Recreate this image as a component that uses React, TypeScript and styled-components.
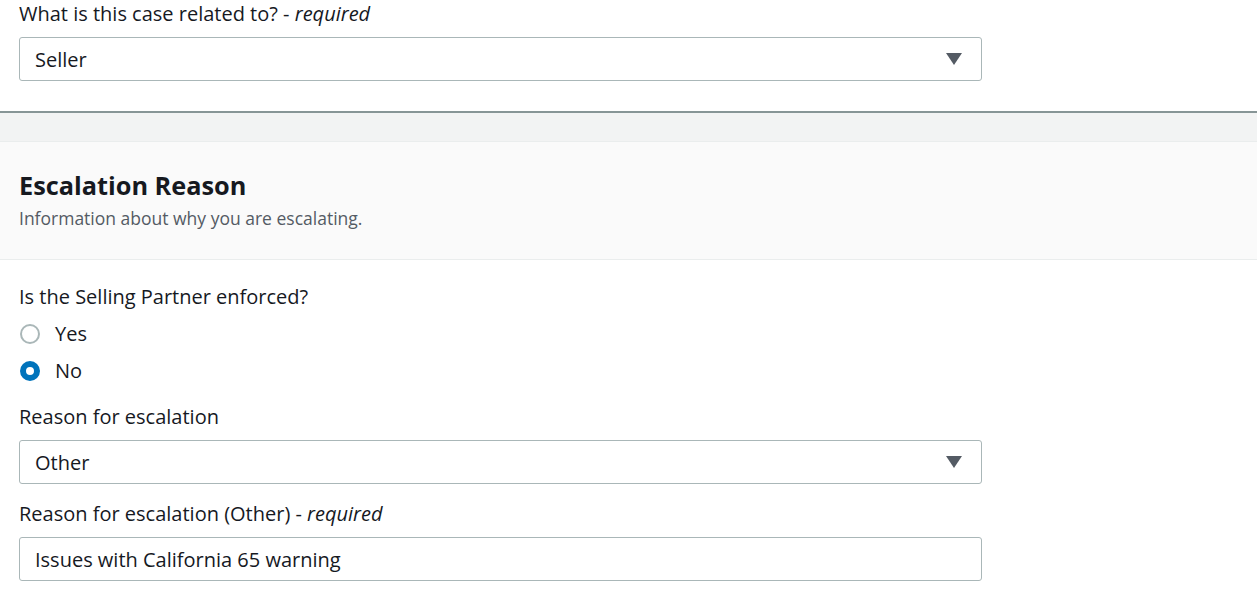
import React from 'react';
import styled, { createGlobalStyle } from 'styled-components';

const GlobalStyle = createGlobalStyle`
  body {
    margin: 0;
    background: #fff;
    font-family: "Open Sans", "Noto Sans", Arial, sans-serif;
    color: #16191f;
  }
`

const Page = styled.div`
  width: 1257px;
  height: 599px;
  overflow: hidden;
  background: #fff;
`

const Section = styled.div<{ $top: number; $bottom?: number }>`
  padding: ${(p) => p.$top}px 19px ${(p) => p.$bottom ?? 0}px;
  width: 963px;
  display: flex;
  flex-direction: column;
`

const Field = styled.div<{ $gap?: number; $after?: number }>`
  display: flex;
  flex-direction: column;
  gap: ${(p) => p.$gap ?? 9}px;
  margin-bottom: ${(p) => p.$after ?? 0}px;
`

const Label = styled.label`
  font-size: 20px;
  line-height: 28px;
  color: #16191f;

  em {
    font-style: italic;
  }
`

const Control = styled.div`
  box-sizing: border-box;
  height: 44px;
  border: 1px solid #aab7b8;
  border-radius: 3px;
  display: flex;
  align-items: center;
  justify-content: space-between;
  padding: 0 19px 0 15px;
  font-size: 20px;
  color: #16191f;
  background: #fff;
`

const Caret = styled.span`
  width: 0;
  height: 0;
  border-left: 8px solid transparent;
  border-right: 8px solid transparent;
  border-top: 12px solid #545b64;
`

const Divider = styled.div`
  border-top: 2px solid #879596;
  background: #f2f3f3;
  height: 28px;
  border-bottom: 1px solid #eaeded;
`

const Header = styled.div`
  box-sizing: border-box;
  background: #fafafa;
  border-bottom: 1px solid #eaeded;
  padding: 28px 19px 0;
  height: 118px;
`

const Title = styled.h2`
  margin: 0;
  font-size: 25.3px;
  line-height: 30px;
  font-weight: 700;
  color: #16191f;
`

const Subtitle = styled.p`
  margin: 6px 0 0;
  font-size: 17.5px;
  line-height: 24px;
  color: #545b64;
`

const RadioGroup = styled.div`
  display: flex;
  flex-direction: column;
`

const RadioRow = styled.div`
  display: flex;
  align-items: center;
  gap: 15px;
  height: 37px;
  font-size: 20px;
  padding-left: 1px;
`

const RadioDot = styled.span<{ $checked?: boolean }>`
  box-sizing: border-box;
  width: 20px;
  height: 20px;
  border-radius: 50%;
  border: ${(p) => (p.$checked ? '6px solid #0073bb' : '2px solid #aab7b8')};
  background: #fff;
`

export default function App() {
  return (
    <Page>
      <GlobalStyle />
      <Section $top={0} $bottom={30}>
        <Field>
          <Label>
            What is this case related to? - <em>required</em>
          </Label>
          <Control>
            Seller
            <Caret />
          </Control>
        </Field>
      </Section>
      <Divider />
      <Header>
        <Title>Escalation Reason</Title>
        <Subtitle>Information about why you are escalating.</Subtitle>
      </Header>
      <Section $top={23}>
        <Field $gap={4} $after={14}>
          <Label>Is the Selling Partner enforced?</Label>
          <RadioGroup>
            <RadioRow>
              <RadioDot />
              Yes
            </RadioRow>
            <RadioRow>
              <RadioDot $checked />
              No
            </RadioRow>
          </RadioGroup>
        </Field>
        <Field $gap={9} $after={16}>
          <Label>Reason for escalation</Label>
          <Control>
            Other
            <Caret />
          </Control>
        </Field>
        <Field>
          <Label>
            Reason for escalation (Other) - <em>required</em>
          </Label>
          <Control>Issues with California 65 warning</Control>
        </Field>
      </Section>
    </Page>
  )
}
